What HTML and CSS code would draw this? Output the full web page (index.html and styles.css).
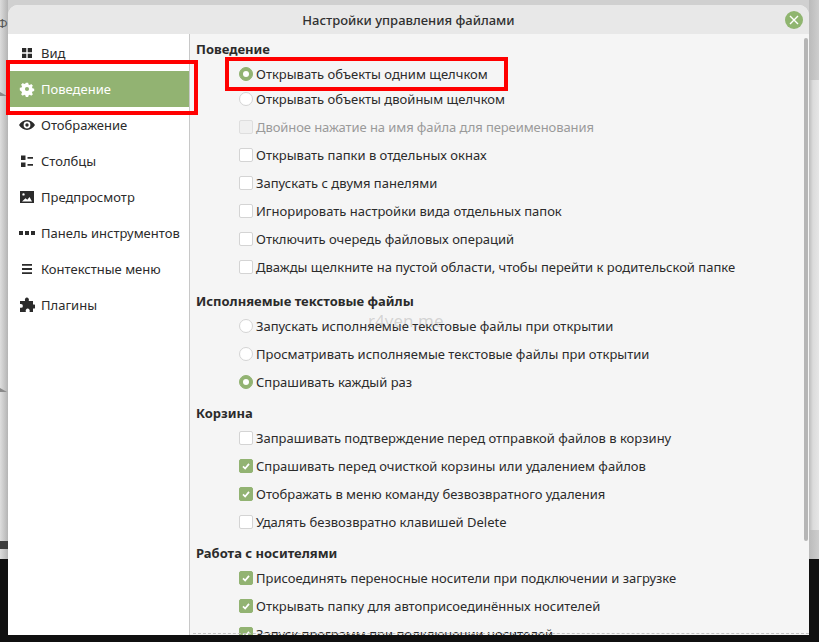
FILE: index.html
```html
<!DOCTYPE html>
<html lang="ru">
<head>
<meta charset="utf-8">
<title>Настройки управления файлами</title>
<link rel="stylesheet" href="styles.css">
</head>
<body>
<div class="desktop">
  <div class="backdrop-top"></div>
  <div class="backdrop-glyph">Ф</div>
  <div class="backdrop-arrow arrow-a"></div>
  <div class="backdrop-arrow arrow-b"></div>
  <div class="backdrop-file"></div>
  <div class="window">
    <header class="titlebar">
      <span class="title">Настройки управления файлами</span>
      <span class="close"><svg width="10" height="10" viewBox="0 0 10 10"><path d="M1 1L9 9M9 1L1 9" stroke="#fff" stroke-width="1.4"/></svg></span>
    </header>
    <div class="body">
      <nav class="sidebar">
        <div class="nav-item"><svg class="ico" viewBox="0 0 16 16"><path d="M3 3h4.300v4.300H3zM8.700 3H13v4.300H8.700zM3 8.700h4.300V13H3zM8.700 8.700H13V13H8.700z" fill="#2b2b2b"/></svg>Вид</div>
        <div class="nav-item active"><svg class="ico" viewBox="0 0 16 16"><path fill="#fff" fill-rule="evenodd" d="M6.700 1h2.600l.4 1.900 1.400.6 1.600-1.100 1.900 1.900-1.100 1.600.6 1.400 1.900.4v2.600l-1.900.4-.6 1.400 1.100 1.600-1.900 1.900-1.600-1.100-1.400.6-.4 1.900H6.700l-.4-1.900-1.400-.6-1.600 1.100-1.900-1.900 1.100-1.600-.6-1.400L0 9.300V6.700l1.900-.4.600-1.400-1.100-1.600 1.900-1.900 1.600 1.100 1.400-.6zM8 5.700a2.300 2.300 0 1 0 0 4.600 2.300 2.300 0 0 0 0-4.600z" transform="translate(.8 .8) scale(.9)"/></svg>Поведение</div>
        <div class="nav-item"><svg class="ico" viewBox="0 0 16 16"><path fill="#2b2b2b" fill-rule="evenodd" d="M8 3c3.500 0 6.200 2.300 8 5-1.800 2.700-4.500 5-8 5S1.800 10.700 0 8c1.800-2.700 4.500-5 8-5zm0 1.600a3.400 3.400 0 1 0 0 6.800 3.400 3.400 0 0 0 0-6.800zm0 1.700a1.700 1.700 0 1 1 0 3.400 1.700 1.700 0 0 1 0-3.400z"/></svg>Отображение</div>
        <div class="nav-item"><svg class="ico" viewBox="0 0 16 16"><path fill="#2b2b2b" d="M2 2.500h4.500V7H2zM8.500 4H14v1.700H8.500zM2 9.500h4.500V14H2zM8.500 11H14v1.700H8.500z"/></svg>Столбцы</div>
        <div class="nav-item"><svg class="ico" viewBox="0 0 16 16"><path fill="#2b2b2b" fill-rule="evenodd" d="M1 2h14v12H1zM3 12.500h10L10.500 8 8.300 10.700 6.500 9.200zM4.500 4.200a1.200 1.200 0 1 0 0 2.400 1.200 1.200 0 0 0 0-2.400z"/></svg>Предпросмотр</div>
        <div class="nav-item"><svg class="ico" viewBox="0 0 16 16"><path fill="#2b2b2b" d="M0 6h4v4H0zM6 6h4v4H6zM12 6h4v4h-4z"/></svg>Панель инструментов</div>
        <div class="nav-item"><svg class="ico" viewBox="0 0 16 16"><path fill="#2b2b2b" d="M3 3h10v1.800H3zM3 7.100h10v1.800H3zM3 11.200h10V13H3z"/></svg>Контекстные меню</div>
        <div class="nav-item"><svg class="ico" viewBox="0 0 16 16"><path fill="#2b2b2b" d="M6 3.200a2 2 0 1 1 3.800 0V4H14v3.600h.4a2 2 0 1 1 0 3.800H14V15h-3.400v-.8a2 2 0 1 0-3.800 0v.8H1v-4.200h1a1.900 1.900 0 1 0 0-3.800H1V4h5z"/></svg>Плагины</div>
      </nav>
      <main class="content">
        <div class="scrollbar"></div>
        <h3 class="head">Поведение</h3>
        <div class="row"><span class="radio on"></span>Открывать объекты одним щелчком</div>
        <div class="row tight"><span class="radio"></span>Открывать объекты двойным щелчком</div>
        <div class="row disabled"><span class="check"></span>Двойное нажатие на имя файла для переименования</div>
        <div class="row"><span class="check"></span>Открывать папки в отдельных окнах</div>
        <div class="row"><span class="check"></span>Запускать с двумя панелями</div>
        <div class="row"><span class="check"></span>Игнорировать настройки вида отдельных папок</div>
        <div class="row"><span class="check"></span>Отключить очередь файловых операций</div>
        <div class="row"><span class="check"></span>Дважды щелкните на пустой области, чтобы перейти к родительской папке</div>
        <h3 class="head wide">Исполняемые текстовые файлы</h3>
        <div class="row"><span class="radio"></span>Запускать исполняемые текстовые файлы при открытии</div>
        <div class="row"><span class="radio"></span>Просматривать исполняемые текстовые файлы при открытии</div>
        <div class="row"><span class="radio on"></span>Спрашивать каждый раз</div>
        <h3 class="head">Корзина</h3>
        <div class="row"><span class="check"></span>Запрашивать подтверждение перед отправкой файлов в корзину</div>
        <div class="row"><span class="check on"><svg viewBox="0 0 14 14"><path d="M3.500 7.500L6 10l4.500-5.500" fill="none" stroke="#fff" stroke-width="2"/></svg></span>Спрашивать перед очисткой корзины или удалением файлов</div>
        <div class="row"><span class="check on"><svg viewBox="0 0 14 14"><path d="M3.500 7.500L6 10l4.500-5.500" fill="none" stroke="#fff" stroke-width="2"/></svg></span>Отображать в меню команду безвозвратного удаления</div>
        <div class="row"><span class="check"></span>Удалять безвозвратно клавишей Delete</div>
        <h3 class="head">Работа с носителями</h3>
        <div class="row"><span class="check on"><svg viewBox="0 0 14 14"><path d="M3.500 7.500L6 10l4.500-5.500" fill="none" stroke="#fff" stroke-width="2"/></svg></span>Присоединять переносные носители при подключении и загрузке</div>
        <div class="row"><span class="check on"><svg viewBox="0 0 14 14"><path d="M3.500 7.500L6 10l4.500-5.500" fill="none" stroke="#fff" stroke-width="2"/></svg></span>Открывать папку для автоприсоединённых носителей</div>
        <div class="row"><span class="check on"><svg viewBox="0 0 14 14"><path d="M3.500 7.500L6 10l4.500-5.500" fill="none" stroke="#fff" stroke-width="2"/></svg></span>Запуск программ при подключении носителей</div>
        <div class="dash"></div>
      </main>
    </div>
  </div>
  <div class="mark mark-sidebar"></div>
  <div class="mark mark-option"></div>
  <div class="watermark">r4ven.me</div>
</div>
</body>
</html>
```

FILE: styles.css
```css
* { box-sizing: border-box; }
html, body { margin: 0; padding: 0; }
body { width: 819px; height: 642px; overflow: hidden; font-family: "Noto Sans", sans-serif; }
.desktop { position: relative; width: 819px; height: 642px; background: #101010; overflow: hidden; }
.backdrop-top {
  position: absolute; left: 0; top: 0; width: 819px; height: 559px;
  background:
    linear-gradient(90deg, #dedede 0, #b4b4b4 8px, transparent 8px, transparent 809px, #bcbcbc 809px, #dcdcdc 813px, #e6e6e6 819px) 0 80px / 819px 450px no-repeat,
    linear-gradient(90deg, #dcdcdc 0, #b4b4b4 8px, transparent 8px, transparent 809px, #bbbbbb 809px, #cdcdcd 819px) 0 0 / 819px 559px no-repeat,
    #d0d0d0;
}
.backdrop-glyph { position: absolute; left: -3px; top: 14px; font-size: 13px; color: #555; }
.backdrop-arrow { position: absolute; left: 0; width: 0; height: 0; border-left: 7px solid #8a8a8a; border-right: 0; border-top: 4px solid transparent; }
.arrow-a { top: 92px; }
.arrow-b { top: 388px; }
.backdrop-file { position: absolute; left: 0; top: 541px; width: 8px; height: 8px; background: #3c3c3c; }
.window { position: absolute; left: 8px; top: 5px; width: 801px; height: 630px; background: #f5f5f5; border-radius: 10px 10px 0 0; display: flex; flex-direction: column; overflow: hidden; }
.titlebar { height: 29px; flex: none; background: #e8e8e8; display: flex; align-items: center; justify-content: center; position: relative; }
.title { font-size: 13px; font-weight: 500; color: #303030; }
.close { position: absolute; left: 777px; top: 6px; width: 18px; height: 18px; border-radius: 50%; background: #8fb56f; display: flex; align-items: center; justify-content: center; }
.body { flex: 1; display: flex; min-height: 0; }
.sidebar { width: 182px; flex: none; background: #fff; border-right: 1px solid #c8c8c8; padding-top: 1px; }
.nav-item { height: 36px; display: flex; align-items: center; gap: 6px; padding-left: 11px; font-size: 13px; color: #2b2b2b; white-space: nowrap; }
.nav-item.active { background: #92b372; color: #fff; }
.ico { width: 16px; height: 16px; flex: none; }
.content { flex: 1; position: relative; padding: 6px 0 0 6px; overflow: hidden; }
.scrollbar { position: absolute; left: 614px; top: 4px; width: 4px; height: 503px; background: #b5b5b5; border-radius: 2px; }
.head { margin: 0; height: 19px; line-height: 19px; font-size: 13px; font-weight: 700; color: #2b2b2b; }
.row { height: 28px; display: flex; align-items: center; gap: 3px; padding-left: 43px; font-size: 13px; color: #2b2b2b; white-space: nowrap; flex: none; }
.row.tight { margin-top: -3px; }
.row.disabled { color: #9a9a9a; letter-spacing: -0.08px; }
.row + .head { margin-top: 8px; }
.row + .head.wide { margin-top: 11px; }
.head + .row { margin-top: 1px; }
.radio, .check { width: 14px; height: 14px; flex: none; background: #fff; border: 1px solid #d4d4d4; display: flex; }
.radio { border-radius: 50%; }
.check { border-radius: 2px; }
.radio.on { background: #92b372; border-color: #92b372; position: relative; }
.radio.on::after { content: ""; position: absolute; left: 3px; top: 3px; width: 6px; height: 6px; border-radius: 50%; background: #fff; }
.check.on { background: #92b372; border-color: #92b372; }
.check.on svg { width: 12px; height: 12px; }
.disabled .check { background: #f0f0f0; border-color: #dedede; }
.dash { position: absolute; left: 3px; right: 0; bottom: 1px; height: 1px; border-bottom: 1px dashed #c4c4c4; }
.mark { position: absolute; border: 4px solid #f00; }
.mark-sidebar { left: 6px; top: 60px; width: 192px; height: 55px; }
.mark-option { left: 225px; top: 57px; width: 283px; height: 34px; }
.watermark { position: absolute; left: 368px; top: 309px; font-size: 17px; color: rgba(130,130,130,.3); }
```
